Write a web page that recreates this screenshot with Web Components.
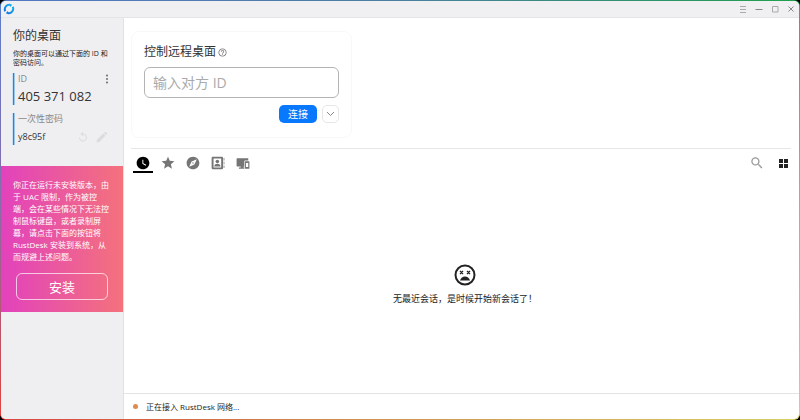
<!DOCTYPE html>
<html lang="zh-CN">
<head>
<meta charset="utf-8">
<title>RustDesk</title>
<style>
html,body{margin:0;height:100%;background:#000}
body{font-family:"Open Sans","Noto Sans CJK SC",sans-serif;color:#333}
</style>
</head>
<body>
<rd-window>
  <rd-titlebar slot="bar"></rd-titlebar>
  <rd-sidebar slot="side">
    <rd-field label="ID" menu><span>405 371 082</span></rd-field>
    <rd-field label="一次性密码" small tools><span>y8c95f</span></rd-field>
    <rd-install slot="notice">你正在运行未安装版本，由于 UAC 限制，作为被控端，会在某些情况下无法控制鼠标键盘，或者录制屏幕，请点击下面的按钮将 RustDesk 安装到系统，从而规避上述问题。</rd-install>
  </rd-sidebar>
  <rd-connect></rd-connect>
  <rd-tabs></rd-tabs>
  <rd-empty>无最近会话，是时候开始新会话了！</rd-empty>
  <rd-status slot="foot">正在接入 RustDesk 网络...</rd-status>
</rd-window>
<script>
const reset = `*{box-sizing:border-box}
button{font:inherit;color:inherit;background:none;border:0;padding:0;margin:0;display:flex;align-items:center;justify-content:center;cursor:pointer}
svg{display:block;flex:none}h1,h2,p{margin:0;font-weight:400}`;
const define = (name, css, html) => customElements.define(name, class extends HTMLElement {
  constructor() {
    super();
    const t = document.createElement('template');
    t.innerHTML = `<style>${reset}${css}</style>${html}`;
    this.attachShadow({mode: 'open'}).append(t.content.cloneNode(true));
  }
});

define('rd-window', `
:host{display:block;min-height:100vh;padding:1px;border-radius:6px;box-sizing:border-box;
 background:linear-gradient(90deg,#5478c4,#4a7fa0 50%,#1fa04c) top/100% 50% no-repeat,
 linear-gradient(90deg,#e0433c,#d08a50 40%,#d8cf68) bottom/100% 50% no-repeat;display:flex}
.frame{flex:1;display:flex;margin:0 -1px;padding:0 1px;border-radius:6px;
 background:linear-gradient(#5c7ec8,#8a6aa8 50%,#e0433c) left/1px 100% no-repeat,
 linear-gradient(#3cab63,#9dbb70 50%,#d8cf68) right/1px 100% no-repeat}
.inner{flex:1;display:flex;flex-direction:column;background:#fff;border-radius:5px;overflow:hidden}
.body{flex:1;display:flex}
main{flex:1;min-width:0;display:flex;flex-direction:column}
.content{flex:1;display:flex;flex-direction:column;padding:13px 8px 0 7px}`,
`<div class="frame"><div class="inner"><slot name="bar"></slot>
<div class="body"><slot name="side"></slot>
<main><div class="content"><slot></slot></div><slot name="foot"></slot></main></div></div></div>`);

define('rd-titlebar', `
:host{display:flex;height:17px;box-sizing:border-box;background:#f0f0f2;border-bottom:1px solid #e4e4e6;align-items:center;justify-content:space-between;padding:0 1px 0 2px}
div{display:flex;gap:2px;color:#888}button{width:14px;height:14px}
svg.w{fill:none;stroke:currentColor;stroke-width:1}`,
`<svg width="12" height="12" viewBox="0 0 24 24" fill="none" stroke-width="4">
<defs><linearGradient id="g" x1="0" y1="1" x2="1" y2="0"><stop stop-color="#0a6fe0"/><stop offset="1" stop-color="#18b8ee"/></linearGradient></defs>
<path stroke="url(#g)" d="M4.5 16.5A9 9 0 0 1 15 4M19.5 7.500A9 9 0 0 1 9 20"/>
<path fill="url(#g)" d="M13 2l5.500 1.500-4 4.500zM11 22l-5.500-1.500 4-4.500z"/></svg>
<div>
<button aria-label="菜单"><svg class="w" width="8" height="8"><path stroke="#aaa" d="M1 1.5h6M1 4.500h6M1 7.500h6"/></svg></button>
<button aria-label="最小化"><svg class="w" width="8" height="8"><path d="M.5 4.500h7"/></svg></button>
<button aria-label="最大化"><svg class="w" width="8" height="8"><path stroke="#aaa" d="M1.500 1.500h5.500v5.500h-5.500z"/></svg></button>
<button aria-label="关闭"><svg class="w" width="8" height="8"><path d="M1.500 1.500l5 5M6.500 1.500l-5 5"/></svg></button>
</div>`);

define('rd-sidebar', `
:host{display:flex;flex-direction:column;width:123px;box-sizing:border-box;background:#efeff2;border-right:1px solid #e2e2e4;flex:none}
header{padding:10px 8px 0 12px}
h1{font-size:12px;line-height:16px;color:#333}
p{font-size:7px;line-height:9px;margin:5px 0 6px;color:#222}
.fields{display:flex;flex-direction:column;gap:8px;padding:0 12px;margin-bottom:21px}`,
`<header><h1>你的桌面</h1><p>你的桌面可以通过下面的 ID 和<br>密码访问。</p></header>
<div class="fields"><slot></slot></div><slot name="notice"></slot>`);

customElements.define('rd-field', class extends HTMLElement {
  connectedCallback() {
    if (this.shadowRoot) return;
    const menu = this.hasAttribute('menu')
      ? `<button aria-label="更多"><svg width="4" height="10" viewBox="0 0 4 10" fill="#777"><circle cx="2" cy="1.500" r="1.100"/><circle cx="2" cy="5" r="1.100"/><circle cx="2" cy="8.500" r="1.100"/></svg></button>` : '';
    const tools = this.hasAttribute('tools')
      ? `<div class="tools"><button aria-label="刷新"><svg width="12" height="12" viewBox="0 0 24 24" fill="#dcdcde"><path d="M12 5V1L7 6l5 5V7c3.310 0 6 2.690 6 6s-2.690 6-6 6-6-2.690-6-6H4c0 4.420 3.580 8 8 8s8-3.580 8-8-3.580-8-8-8z"/></svg></button>
<button aria-label="编辑"><svg width="14" height="14" viewBox="0 0 24 24" fill="#dcdcde"><path d="M3 17.250V21h3.750L17.810 9.940l-3.750-3.750L3 17.250zM20.710 7.040a1 1 0 0 0 0-1.410l-2.340-2.340a1 1 0 0 0-1.410 0l-1.830 1.830 3.750 3.750 1.830-1.830z"/></svg></button></div>` : '';
    this.attachShadow({mode: 'open'}).innerHTML = `<style>${reset}
:host{display:flex;flex-direction:column;justify-content:space-between;height:32px;box-sizing:border-box;border-left:1px solid #1488e4;box-shadow:inset 1px 0 #9cc8ee,-1px 0 #c8dff4;padding:0 2px 0 4px}
.row{display:flex;align-items:center;justify-content:space-between}
.label{font-size:9px;line-height:12px;color:#888}
.value{font-size:13px;line-height:18px;color:#333}
:host([small]) .value{font-size:9px;line-height:16px}
.tools{display:flex;gap:6px}</style>
<div class="row"><span class="label">${this.getAttribute('label')}</span>${menu}</div>
<div class="row"><span class="value"><slot></slot></span>${tools}</div>`;
  }
});

define('rd-install', `
:host{display:block;padding:13px 12px 12px;color:#fff;background:linear-gradient(90deg,#e242bc,#f4727c)}
p{font-size:8px;line-height:12px}
button{width:92px;height:27px;margin:10px auto 0 3px;border:1px solid #ffffffb0;border-radius:6px;font-size:13px;line-height:18px}`,
`<p><slot></slot></p><button>安装</button>`);

define('rd-connect', `
:host{display:block;width:221px;box-sizing:border-box;border:1px solid #f8f8f6;border-radius:8px;padding:11px 12px 14px}
h2{display:flex;align-items:center;gap:2px;font-size:12px;line-height:18px;color:#333;margin-bottom:6px}
input{display:block;width:100%;height:31px;border:1px solid #b4b4b4;border-radius:6px;padding:0 8px;font:inherit;font-size:14px;color:#333;background:#fff;outline:0}
input::placeholder{color:#aaa;opacity:1}
.row{display:flex;justify-content:flex-end;gap:5px;margin-top:7px}
.go{width:38px;height:18px;background:#0878fc;color:#fff;border-radius:5px;font-size:10px;line-height:14px}
.more{width:17px;height:18px;border:1px solid #e6e6e6;border-radius:5px}`,
`<h2><label for="peer">控制远程桌面</label><svg width="9" height="9" viewBox="1 1 22 22" fill="#777"><path d="M11 18h2v-2h-2v2zm1-16C6.480 2 2 6.480 2 12s4.480 10 10 10 10-4.480 10-10S17.520 2 12 2zm0 18c-4.410 0-8-3.590-8-8s3.590-8 8-8 8 3.590 8 8-3.590 8-8 8zm0-14c-2.210 0-4 1.790-4 4h2c0-1.100.9-2 2-2s2 .9 2 2c0 2-3 1.750-3 5h2c0-2.250 3-2.500 3-5 0-2.210-1.790-4-4-4z"/></svg></h2>
<input id="peer" placeholder="输入对方 ID">
<div class="row"><button class="go">连接</button><button class="more" aria-label="更多"><svg width="9" height="6" fill="none" stroke="#888"><path d="M1 1l3.500 3.500L8 1"/></svg></button></div>`);

define('rd-tabs', `
:host{display:flex;align-items:flex-start;justify-content:space-between;border-top:1px solid #e6e6e6;margin-top:10px;padding:5px 0 0 2px}
div{display:flex;gap:5px}
button{width:20px;height:19px;color:#757575;border-bottom:1px solid transparent}
button.on{color:#000;border-bottom:2px solid #000}
svg{fill:currentColor}.right{gap:10px}.right button{width:16px}`,
`<div>
<button class="on" aria-label="最近会话"><svg width="14" height="14" viewBox="1 1 22 22"><path d="M12 2C6.500 2 2 6.500 2 12s4.500 10 10 10 10-4.500 10-10S17.500 2 12 2zm4.200 14.200L11 13V7h1.500v5.200l4.500 2.700-.8 1.300z"/></svg></button>
<button aria-label="收藏"><svg width="14" height="14" viewBox="1 1 22 22"><path d="M12 17.270L18.180 21l-1.640-7.030L22 9.240l-7.190-.61L12 2 9.190 8.630 2 9.240l5.460 4.730L5.820 21z"/></svg></button>
<button aria-label="已发现"><svg width="14" height="14" viewBox="1 1 22 22"><path d="M12 10.900a1.100 1.100 0 1 0 0 2.200 1.100 1.100 0 0 0 0-2.200zM12 2C6.480 2 2 6.480 2 12s4.480 10 10 10 10-4.480 10-10S17.520 2 12 2zm2.190 12.190L6 18l3.810-8.190L18 6l-3.810 8.190z"/></svg></button>
<button aria-label="地址簿"><svg width="14" height="14" viewBox="1 1 22 22"><path fill-rule="evenodd" d="M4 2h14a2 2 0 0 1 2 2v16a2 2 0 0 1-2 2H4a2 2 0 0 1-2-2V4c0-1.100.9-2 2-2zm1 3v14h12V5zM21 4h1v4h-1zM21 10h1v4h-1zM21 16h1v4h-1z"/><circle cx="11" cy="9.500" r="2.800"/><path d="M6 17.500c0-3.500 3-4.500 5-4.500s5 1 5 4.500z"/></svg></button>
<button aria-label="可访问的设备"><svg width="14" height="13" viewBox="0 1 24 22"><path d="M2 3h19v4h-5a2 2 0 0 0-2 2v8h-1v2h1v2H5v-2h3v-2H2a1 1 0 0 1-1-1V4a1 1 0 0 1 1-1z"/><path fill-rule="evenodd" d="M16 8h6a1 1 0 0 1 1 1v11a1 1 0 0 1-1 1h-6a1 1 0 0 1-1-1V9a1 1 0 0 1 1-1zm1 3v7h4v-7z"/></svg></button>
</div>
<div class="right">
<button aria-label="搜索"><svg width="14" height="14" viewBox="1 1 22 22" style="color:#999"><path d="M15.500 14h-.79l-.28-.27A6.470 6.470 0 0 0 16 9.500 6.500 6.500 0 1 0 9.500 16c1.610 0 3.090-.59 4.230-1.570l.27.28v.79l5 4.990L20.490 19l-4.990-5zm-6 0C7.010 14 5 11.990 5 9.500S7.010 5 9.500 5 14 7.010 14 9.500 11.990 14 9.500 14z"/></svg></button>
<button aria-label="视图"><svg width="9" height="9" viewBox="0 0 9 9" style="color:#222"><path d="M0 0h4v4H0zM5 0h4v4H5zM0 5h4v4H0zM5 5h4v4H5z"/></svg></button>
</div>`);

define('rd-empty', `
:host{display:flex;flex:1;flex-direction:column;align-items:center;justify-content:center;gap:6px;font-size:9px;line-height:12px;color:#222;padding:2px 0 0 8px}`,
`<svg width="24" height="24" viewBox="0 0 24 24" fill="none" stroke="#222" stroke-width="2"><circle cx="12" cy="12" r="9.500"/><path stroke-width="1.300" d="M7 8l3 3M10 8l-3 3M14 8l3 3M17 8l-3 3"/><path fill="#222" stroke="none" d="M7 17.500c.8-2.500 2.800-4 5-4s4.200 1.500 5 4z"/></svg>
<p><slot></slot></p>`);

define('rd-status', `
:host{display:flex;align-items:center;gap:8px;height:26px;box-sizing:border-box;border-top:1px solid #e4e4e4;padding:0 9px;font-size:8px;line-height:12px;color:#222}
i{width:5px;height:5px;border-radius:50%;background:#e08a4c}`,
`<i></i><span><slot></slot></span>`);
</script>
</body>
</html>
